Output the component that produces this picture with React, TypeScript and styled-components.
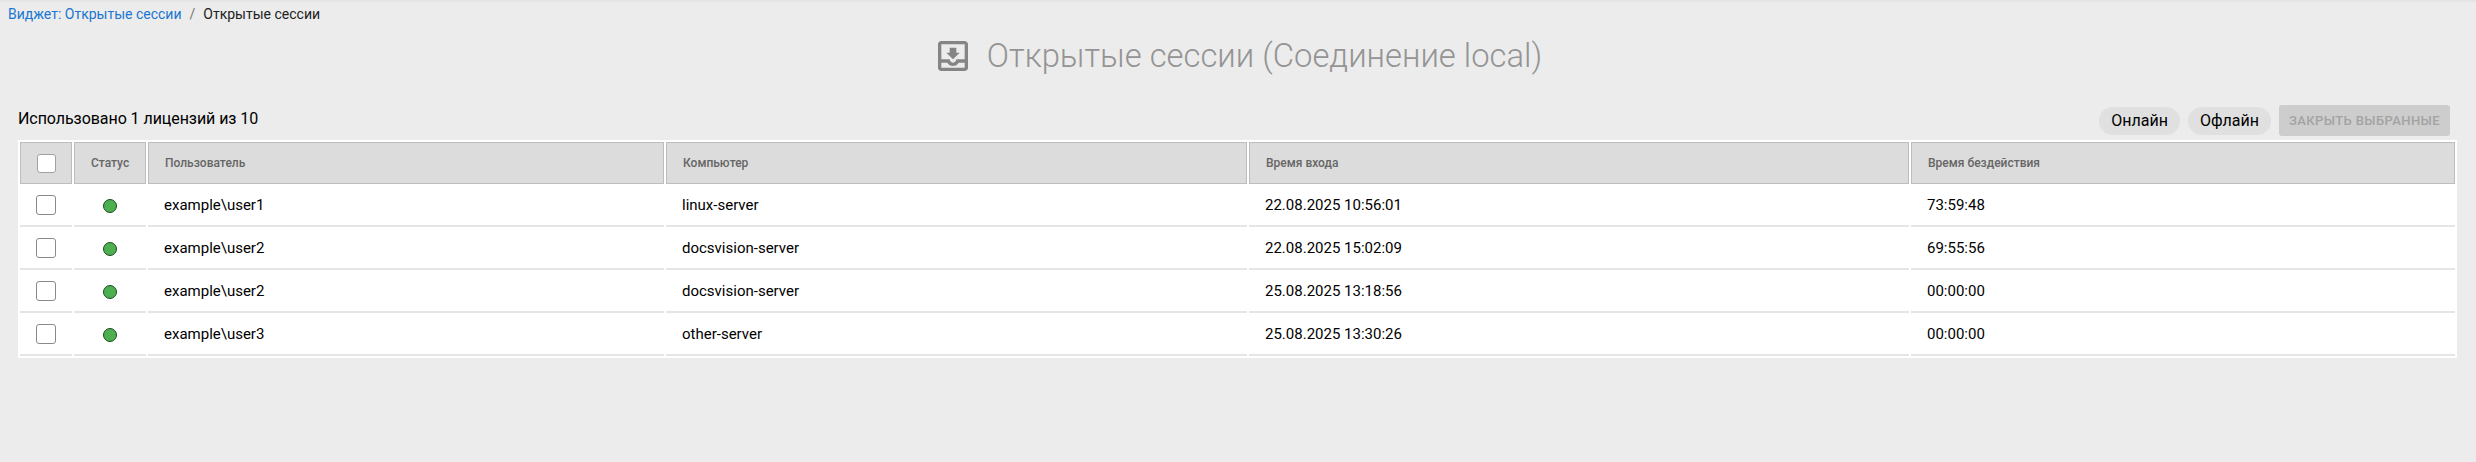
import { createGlobalStyle } from "styled-components"
import styled from "styled-components"

const GlobalStyle = createGlobalStyle`
  html, body {
    margin: 0;
    padding: 0;
    background: #ececec;
    font-family: Roboto, "Liberation Sans", sans-serif;
  }
`

const Page = styled.div`
  height: 462px;
  box-sizing: border-box;
  padding: 0 19px 0 18px;
  background: #ececec;
  border-top: 2px solid #e4e4e4;
  overflow: hidden;
`

const Breadcrumbs = styled.div`
  display: flex;
  align-items: center;
  height: 24px;
  margin-left: -10px;
  font-size: 14px;
  color: #212121;
`

const CrumbLink = styled.a`
  color: #1976d2;
  text-decoration: none;
`

const CrumbSeparator = styled.span`
  margin: 0 8px;
  color: #757575;
`

const Title = styled.h1`
  display: flex;
  align-items: center;
  justify-content: center;
  gap: 14px;
  height: 60px;
  margin: 0 0 14px 0;
  font-size: 32.8px;
  font-weight: 300;
  color: #949494;

  svg {
    color: #858585;
  }
`

const Toolbar = styled.div`
  display: flex;
  align-items: flex-end;
  justify-content: space-between;
  height: 36px;
  margin-bottom: 4px;
  padding: 0 7px 0 0;
`

const LicenseInfo = styled.div`
  padding-bottom: 8px;
  font-size: 16px;
  letter-spacing: -0.06px;
  color: #000;
`

const Actions = styled.div`
  display: flex;
  align-items: center;
  gap: 8px;
`

const Chip = styled.button`
  height: 28px;
  padding: 0 12px;
  border: 0;
  border-radius: 14px;
  background: #e0e0e0;
  color: #000;
  font: 400 16px Roboto, sans-serif;
`

const CloseButton = styled.button`
  height: 31px;
  padding: 0 10px;
  border: 0;
  border-radius: 3px;
  background: #cdcdcd;
  color: #a3a3a3;
  font: 500 13px Roboto, sans-serif;
  letter-spacing: 0.4px;
  text-transform: uppercase;
`

const Table = styled.table`
  width: 100%;
  table-layout: fixed;
  border-collapse: separate;
  border-spacing: 2px 0;
  padding-top: 2px;
  padding-bottom: 2px;
  background: #fff;
`

const HeadCell = styled.th<{ $center?: boolean }>`
  box-sizing: border-box;
  height: 42px;
  padding: 0 16px;
  border: 1px solid #bdbdbd;
  background: #dcdcdc;
  color: #666;
  font-size: 12px;
  font-weight: 500;
  text-align: ${(p) => (p.$center ? "center" : "left")};
`

const Cell = styled.td<{ $center?: boolean }>`
  box-sizing: border-box;
  height: 43px;
  padding: 0 16px;
  border-bottom: 2px solid #e5e5e5;
  color: #000;
  font-size: 15px;
  text-align: ${(p) => (p.$center ? "center" : "left")};
`

const Checkbox = styled.span<{ $head?: boolean }>`
  display: inline-block;
  box-sizing: border-box;
  width: ${(p) => (p.$head ? "19px" : "20px")};
  height: ${(p) => (p.$head ? "19px" : "20px")};
  border: 1px solid ${(p) => (p.$head ? "#a0a0a0" : "#8a8a8a")};
  border-radius: 3px;
  background: #fff;
  vertical-align: middle;
`

const StatusDot = styled.span<{ $online: boolean }>`
  display: inline-block;
  box-sizing: border-box;
  width: 14px;
  height: 14px;
  border: 1px solid #1f4a22;
  border-radius: 50%;
  background: ${(p) => (p.$online ? "#4caf50" : "#bdbdbd")};
  vertical-align: middle;
`

const InboxIcon = () => (
  <svg width="40" height="40" viewBox="0 0 24 24" fill="currentColor">
    <path d="M19 3H5c-1.1 0-2 .9-2 2v14c0 1.1.9 2 2 2h14c1.1 0 2-.9 2-2V5c0-1.1-.9-2-2-2zm0 16H5v-3h3.56c.69 1.19 1.97 2 3.45 2s2.75-.81 3.45-2H19v3zm0-5h-4.99c0 1.1-.9 2-2 2s-2-.9-2-2H5V5h14v9zm-3-4h-2V7h-4v3H8l4 4 4-4z" />
  </svg>
)

const sessions = [
  { user: "example\\user1", host: "linux-server", login: "22.08.2025 10:56:01", idle: "73:59:48" },
  { user: "example\\user2", host: "docsvision-server", login: "22.08.2025 15:02:09", idle: "69:55:56" },
  { user: "example\\user2", host: "docsvision-server", login: "25.08.2025 13:18:56", idle: "00:00:00" },
  { user: "example\\user3", host: "other-server", login: "25.08.2025 13:30:26", idle: "00:00:00" },
]

export default function App() {
  return (
    <>
      <GlobalStyle />
      <Page>
        <Breadcrumbs>
          <CrumbLink href="#">Виджет: Открытые сессии</CrumbLink>
          <CrumbSeparator>/</CrumbSeparator>
          <span>Открытые сессии</span>
        </Breadcrumbs>
        <Title>
          <InboxIcon />
          Открытые сессии (Соединение local)
        </Title>
        <Toolbar>
          <LicenseInfo>Использовано 1 лицензий из 10</LicenseInfo>
          <Actions>
            <Chip>Онлайн</Chip>
            <Chip>Офлайн</Chip>
            <CloseButton disabled>Закрыть выбранные</CloseButton>
          </Actions>
        </Toolbar>
        <Table>
          <colgroup>
            <col width={52} />
            <col width={72} />
            <col width={516} />
            <col width={581} />
            <col width={660} />
            <col />
          </colgroup>
          <thead>
            <tr>
              <HeadCell $center>
                <Checkbox $head />
              </HeadCell>
              <HeadCell $center>Статус</HeadCell>
              <HeadCell>Пользователь</HeadCell>
              <HeadCell>Компьютер</HeadCell>
              <HeadCell>Время входа</HeadCell>
              <HeadCell>Время бездействия</HeadCell>
            </tr>
          </thead>
          <tbody>
            {sessions.map((s) => (
              <tr key={s.login}>
                <Cell $center>
                  <Checkbox />
                </Cell>
                <Cell $center>
                  <StatusDot $online />
                </Cell>
                <Cell>{s.user}</Cell>
                <Cell>{s.host}</Cell>
                <Cell>{s.login}</Cell>
                <Cell>{s.idle}</Cell>
              </tr>
            ))}
          </tbody>
        </Table>
      </Page>
    </>
  )
}
